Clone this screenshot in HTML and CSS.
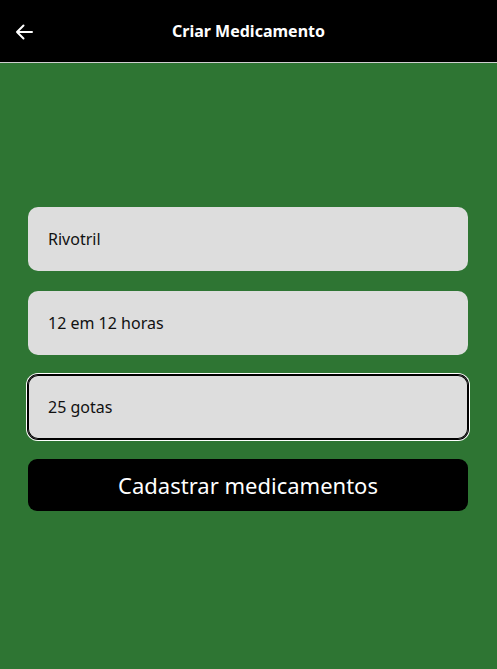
FILE: index.html
```html
<!DOCTYPE html>
<html lang="pt">
<head>
<meta charset="utf-8">
<title>Criar Medicamento</title>
<link rel="stylesheet" href="styles.css">
</head>
<body>
<header class="topbar">
  <button class="back" aria-label="Voltar">
    <svg width="18" height="16" viewBox="0 0 18 16" fill="none" stroke="#fff" stroke-width="2" stroke-linecap="round" stroke-linejoin="round"><path d="M17 8H2M8.5 1.5L2 8l6.5 6.5"/></svg>
  </button>
  <h1 class="title">Criar Medicamento</h1>
</header>
<main class="content">
  <form class="form">
    <div class="field"><input class="input" type="text" value="Rivotril"></div>
    <div class="field"><input class="input" type="text" value="12 em 12 horas"></div>
    <div class="field focused"><input class="input" type="text" value="25 gotas"></div>
    <button type="button" class="submit">Cadastrar medicamentos</button>
  </form>
</main>
</body>
</html>
```
FILE: styles.css
```css
* { box-sizing: border-box; }
html, body { margin: 0; height: 100%; }
body {
  background: #2e7533;
  font-family: "Noto Sans", "Open Sans", sans-serif;
}
.topbar {
  height: 63px;
  background: #000;
  border-bottom: 1px solid #cfcfcf;
  display: flex;
  align-items: center;
  position: relative;
}
.back {
  background: none;
  border: 0;
  padding: 0;
  margin-left: 15px;
  margin-top: 1px;
  display: flex;
  cursor: pointer;
}
.title {
  position: absolute;
  left: 0; right: 0;
  text-align: center;
  margin: 0;
  color: #fff;
  font-size: 16px;
  font-weight: 700;
  pointer-events: none;
}
.content { padding: 144px 29px 0 28px; }
.form { display: flex; flex-direction: column; gap: 20px; }
.field {
  height: 64px;
  background: #dddddd;
  border-radius: 10px;
  display: flex;
  align-items: center;
}
.field.focused {
  box-shadow: inset 0 0 0 1px #000, 0 0 0 1px #000, 0 0 0 2px #fff;
}
.input {
  width: 100%;
  border: 0;
  background: transparent;
  outline: none;
  padding: 0 20px;
  font-family: inherit;
  font-size: 16px;
  color: #111;
}
.submit {
  height: 52px;
  background: #000;
  border: 0;
  border-radius: 9px;
  color: #fff;
  font-family: inherit;
  font-size: 22px;
  padding: 0;
}
```
